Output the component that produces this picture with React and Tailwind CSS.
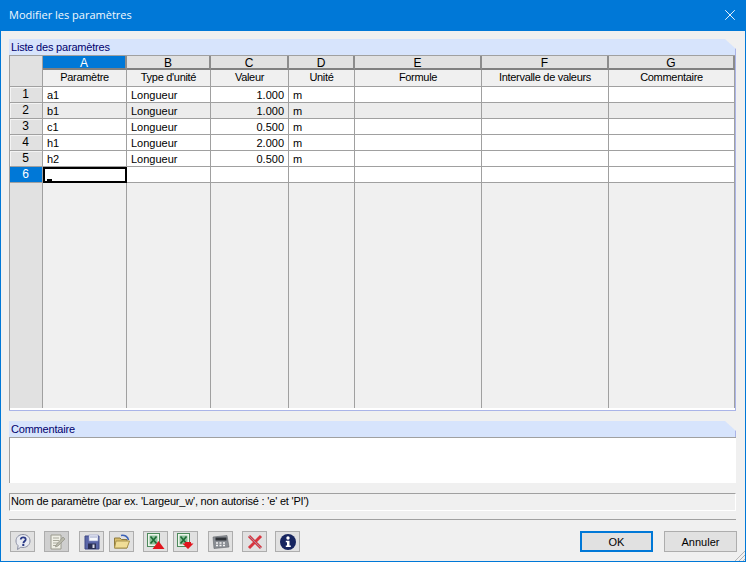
import { X } from "lucide-react";

const columns = [
  { key: "A", label: "Paramètre" },
  { key: "B", label: "Type d'unité" },
  { key: "C", label: "Valeur" },
  { key: "D", label: "Unité" },
  { key: "E", label: "Formule" },
  { key: "F", label: "Intervalle de valeurs" },
  { key: "G", label: "Commentaire" },
];

const rows = [
  { name: "a1", type: "Longueur", value: "1.000", unit: "m" },
  { name: "b1", type: "Longueur", value: "1.000", unit: "m" },
  { name: "c1", type: "Longueur", value: "0.500", unit: "m" },
  { name: "h1", type: "Longueur", value: "2.000", unit: "m" },
  { name: "h2", type: "Longueur", value: "0.500", unit: "m" },
];

const gridCols = "grid grid-cols-[33px_84px_84px_78px_66px_127px_127px_126px]";

function GroupHeader({ children }) {
  return (
    <div className="relative h-[16px] bg-[#d7e4fc] pl-[2px] text-[11px] leading-[16px] tracking-[-0.2px] text-[#00006e]">
      {children}
      <svg className="absolute right-[-1px] top-0" width="11" height="11">
        <path d="M0 0H11V10Z" fill="#f0f0f0" />
      </svg>
    </div>
  );
}

function Cell({ bg = "bg-white", align = "text-left pl-[4px]", children }) {
  return (
    <div className={`h-[16px] border-b border-r border-[#a0a0a0] ${bg} ${align} text-[11px] leading-[17px] text-black`}>
      {children}
    </div>
  );
}

function RowNum({ n, active }) {
  return (
    <div
      className={`h-[16px] border-b border-r border-[#a0a0a0] pr-[1px] text-center text-[12px] leading-[14px] ${
        active ? "bg-[#0078d7] text-white" : "bg-[#e1e1e1] text-black shadow-[inset_1px_1px_0_#f4f4f4]"
      }`}
    >
      {n}
    </div>
  );
}

function ToolButton({ children, className = "" }) {
  return (
    <div className={`flex h-[21px] w-[25px] shrink-0 items-center justify-center border border-[#adadad] ${className}`}>
      {children}
    </div>
  );
}

function ExcelIcon({ arrow }) {
  return (
    <svg width="19" height="17" viewBox="0 0 19 17">
      <rect x="1.500" y="0.500" width="12" height="13" fill="#eef5ec" stroke="#4d8a5c" />
      <rect x="3.500" y="2.500" width="8" height="9" fill="#8cc09a" />
      <path d="M4.500 3.500l6 7M10.500 3.500l-6 7" stroke="#1d6b34" strokeWidth="1.600" />
      {arrow === "up" ? (
        <path d="M12.500 8L18.500 16H6.500Z" fill="#e1141d" />
      ) : (
        <path d="M12 16L17.500 10.500H15V9H9V10.500H6.500Z" fill="#e1141d" />
      )}
    </svg>
  );
}

export default function App() {
  return (
    <div
      className="relative flex h-[562px] w-[746px] flex-col overflow-hidden border border-t-0 border-[#0078d7] bg-[#f0f0f0]"
      style={{ fontFamily: '"Liberation Sans", Arial, sans-serif' }}
    >
      <div className="flex h-[31px] shrink-0 items-center justify-between bg-[#0078d7] pl-[8px] pr-[6px] text-white">
        <span className="text-[11px] text-[#f2f8fd]" style={{ fontFamily: '"Open Sans", sans-serif' }}>
          Modifier les paramètres
        </span>
        <X size={18} strokeWidth={1.2} className="-mt-[1px]" />
      </div>

      <div className="flex flex-1 flex-col pl-[8px] pr-[9px] pt-[8px]">
        <div className="flex h-[372px] flex-col border-b border-r border-[#aab4e8]">
          <GroupHeader>Liste des paramètres</GroupHeader>
          <div className="flex flex-1 flex-col border-l border-t border-[#a0a0a0] bg-white pb-[2px]">
            <div className={gridCols}>
              <div className="row-span-2 border-b border-r border-[#a0a0a0] bg-[#e1e1e1]" />
              {columns.map((c) => (
                <div
                  key={c.key}
                  className={`h-[14px] border-b-2 border-r-2 border-b-[#808080] border-r-[#8c8c8c] text-center text-[12px] leading-[15px] ${
                    c.key === "A" ? "bg-[#0078d7] text-white" : "bg-[#e1e1e1] text-black"
                  }`}
                >
                  {c.key}
                </div>
              ))}
              {columns.map((c) => (
                <div
                  key={c.label}
                  className="h-[17px] border-b border-r border-[#a0a0a0] bg-[#f0f0f0] text-center text-[11px] leading-[14px] tracking-[-0.3px] text-black"
                >
                  {c.label}
                </div>
              ))}
            </div>

            {rows.map((r, i) => {
              const bg = i === 1 ? "bg-[#ececec]" : "bg-white";
              return (
                <div key={r.name} className={gridCols}>
                  <RowNum n={i + 1} />
                  <Cell bg={bg}>{r.name}</Cell>
                  <Cell bg={bg}>{r.type}</Cell>
                  <Cell bg={bg} align="pr-[4px] text-right">{r.value}</Cell>
                  <Cell bg={bg}>{r.unit}</Cell>
                  <Cell bg={bg} />
                  <Cell bg={bg} />
                  <Cell bg={bg} />
                </div>
              );
            })}

            <div className={gridCols}>
              <RowNum n={6} active />
              <div className="relative h-[16px] border-2 border-black bg-white">
                <div className="absolute bottom-0 left-[2px] h-[2px] w-[5px] bg-black" />
              </div>
              <Cell />
              <Cell />
              <Cell />
              <Cell />
              <Cell />
              <Cell />
            </div>

            <div className={`${gridCols} flex-1`}>
              <div className="border-r border-[#a0a0a0] bg-[#e1e1e1]" />
              {columns.map((c) => (
                <div key={c.key} className="border-r border-[#a0a0a0] bg-[#f0f0f0]" />
              ))}
            </div>
          </div>
        </div>

        <div className="mt-[10px] flex flex-col">
          <div className="border-r border-[#aab4e8]">
            <GroupHeader>Commentaire</GroupHeader>
          </div>
          <div className="h-[46px] border-l border-t border-[#a0a0a0] bg-white" />
        </div>

        <div className="mt-[10px] h-[18px] border border-b-white border-l-[#a0a0a0] border-r-white border-t-[#a0a0a0] bg-[#f0f0f0] pl-[1px] text-[11px] leading-[15px] tracking-[-0.2px] text-black">
          Nom de paramètre (par ex. 'Largeur_w', non autorisé : 'e' et 'PI')
        </div>

        <div className="mt-[8px] border-t border-[#a0a0a0]" />

        <div className="mt-[11px] flex h-[21px] items-center">
          <ToolButton className="ml-[1px] bg-[#e1e1e1]">
            <svg width="18" height="18" viewBox="0 0 18 18">
              <path d="M9 1.500c4.200 0 7 2.800 7 6.500s-3 6.500-7 6.500c-.8 0-1.500-.1-2.200-.3L3.500 16.500l.6-3.800C2.700 11.500 2 9.900 2 8c0-3.700 2.800-6.500 7-6.500Z" fill="#e9ebf2" stroke="#8b8fa3" />
              <path d="M6.700 6.500C6.900 5 8 4.300 9.200 4.300c1.500 0 2.500.9 2.500 2.100 0 1.700-2.300 2-2.300 3.800" fill="none" stroke="#2b3a86" strokeWidth="1.800" />
              <rect x="8.300" y="11" width="2" height="2" fill="#2b3a86" />
            </svg>
          </ToolButton>
          <ToolButton className="ml-[9px] bg-[#cfcfcf]">
            <svg width="18" height="18" viewBox="0 0 18 18">
              <path d="M3 2H13V16H3Z" fill="#efefe6" stroke="#9a9a8e" />
              <path d="M5 5H11M5 7.500H11M5 10H10M5 12.500H9" stroke="#a9a99c" />
              <path d="M8 12L15 4L17 6L10 13L7.500 14Z" fill="#b8b8aa" stroke="#8a8a7e" strokeWidth=".6" />
            </svg>
          </ToolButton>
          <ToolButton className="ml-[10px] bg-[#e1e1e1]">
            <svg width="18" height="18" viewBox="0 0 18 18">
              <path d="M2 3H16V16H2Z" fill="#5a66a8" stroke="#3f4985" />
              <rect x="6" y="2" width="9" height="6" fill="#f5f7fb" stroke="#8a93c5" strokeWidth=".6" />
              <path d="M7 4H14" stroke="#9aa3c9" />
              <rect x="5" y="10.500" width="8" height="5.500" fill="#2a2f55" />
              <rect x="9.500" y="11.500" width="2" height="3.500" fill="#d9dcec" />
            </svg>
          </ToolButton>
          <ToolButton className="ml-[5px] bg-[#e1e1e1]">
            <svg width="18" height="18" viewBox="0 0 18 18">
              <path d="M1.500 5H7L8.500 6.500H14V15H1.500Z" fill="#d8bd6a" stroke="#8d7a3f" />
              <path d="M3 8H16.500L14 15H1.500Z" fill="#f0dd96" stroke="#a8924d" />
              <path d="M8 2.500C11 1.500 15 3.500 15.500 7" fill="none" stroke="#3c62b8" strokeWidth="1.600" />
            </svg>
          </ToolButton>
          <ToolButton className="ml-[9px] bg-[#e1e1e1]">
            <ExcelIcon arrow="up" />
          </ToolButton>
          <ToolButton className="ml-[5px] bg-[#e1e1e1]">
            <ExcelIcon arrow="down" />
          </ToolButton>
          <ToolButton className="ml-[10px] bg-[#e1e1e1]">
            <svg width="18" height="16" viewBox="0 0 18 16">
              <path d="M1 3L15 1.500L17 13L2 14.500Z" fill="#8a8e94" stroke="#63666c" strokeWidth=".6" />
              <rect x="3.500" y="3.500" width="11" height="3" fill="#2f3338" />
              <path d="M4 9H6M7.500 9H9.500M11 9H13M4 11.500H6M7.500 11.500H9.500M11 11.500H13" stroke="#f4f4f4" strokeWidth="1.300" />
            </svg>
          </ToolButton>
          <ToolButton className="ml-[9px] bg-[#e1e1e1]">
            <svg width="18" height="18" viewBox="0 0 18 18">
              <path d="M3 3L15 15M15 3L3 15" stroke="#d8353f" strokeWidth="3" />
              <path d="M3 3L15 15" stroke="#9aa0b5" strokeWidth=".8" />
            </svg>
          </ToolButton>
          <ToolButton className="ml-[8px] bg-[#e1e1e1]">
            <svg width="18" height="18" viewBox="0 0 18 18">
              <circle cx="9" cy="9" r="8" fill="#16245f" />
              <circle cx="9" cy="5" r="1.700" fill="#fff" />
              <path d="M6.800 7.800H10.500V12.500H11.800V14H6.800V12.500H8V9.300H6.800Z" fill="#fff" />
            </svg>
          </ToolButton>

          <div className="ml-auto -mr-[1px] flex items-center gap-[11px] text-[11px] text-black">
            <div className="flex h-[21px] w-[73px] items-center justify-center border-2 border-[#0078d7] bg-[#e1e1e1] pt-[1px]">OK</div>
            <div className="flex h-[21px] w-[73px] items-center justify-center border border-[#adadad] bg-[#e1e1e1] pt-[1px]">Annuler</div>
          </div>
        </div>
      </div>

      <svg className="absolute bottom-0 right-0" width="12" height="10" viewBox="0 0 12 10">
        <path d="M12 0L2 10M12 4L6 10M12 8L10 10" stroke="#b4b4b4" />
      </svg>
    </div>
  );
}
